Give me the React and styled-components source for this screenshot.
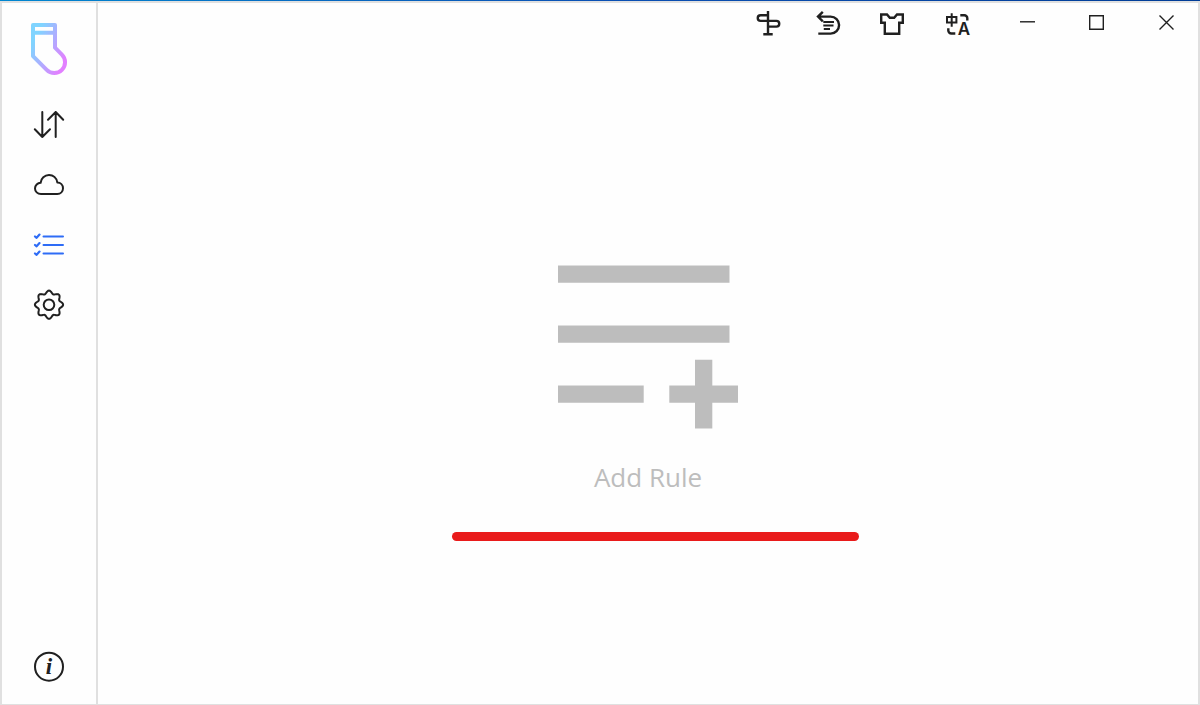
import { useState } from "react";
import styled, { createGlobalStyle } from "styled-components";

const GlobalStyle = createGlobalStyle`
  * {
    box-sizing: border-box;
  }
  body {
    margin: 0;
    background: #fefefe;
    color: #202020;
    font-family: "Open Sans", "Noto Sans", sans-serif;
  }
`;

const Window = styled.div`
  display: flex;
  flex-direction: column;
  min-height: 100vh;
`;

const AccentStrip = styled.div`
  height: 1px;
  background: linear-gradient(90deg, #0086d0, #0a50b4 50%, #003c96);
`;

const Frame = styled.div`
  display: flex;
  flex: 1;
  border: 2px solid #e0e0e0;
  border-bottom-width: 1px;
`;

const Sidebar = styled.nav`
  display: flex;
  flex-direction: column;
  align-items: center;
  flex: none;
  width: 96px;
  padding: 18px 0 7px;
  border-right: 2px solid #e0e0e0;
`;

const Logo = styled.svg`
  flex: none;
  width: 40px;
  height: 56px;
  margin-bottom: 18px;
`;

const NavButton = styled.button`
  display: flex;
  align-items: center;
  justify-content: center;
  width: 100%;
  height: 60px;
  padding: 0;
  border: none;
  background: none;
  color: ${({ $active }) => ($active ? "#2e6cf6" : "#202020")};
  cursor: pointer;
`;

const Spacer = styled.div`
  flex: 1;
`;

const Page = styled.div`
  display: flex;
  flex-direction: column;
  flex: 1;
  min-width: 0;
`;

const TitleBar = styled.header`
  display: flex;
  justify-content: flex-end;
  gap: 6px;
`;

const BarButton = styled.button`
  display: flex;
  align-items: center;
  justify-content: center;
  width: ${({ $width }) => $width}px;
  height: 40px;
  padding: 0;
  border: none;
  background: none;
  color: #202020;
`;

const Main = styled.main`
  display: flex;
  flex-direction: column;
  align-items: center;
  justify-content: center;
  flex: 1;
  padding-top: 58px;
`;

const AddButton = styled.button`
  display: flex;
  flex-direction: column;
  align-items: center;
  gap: 30px;
  padding: 0;
  border: none;
  background: none;
  color: #bdbdbd;
  font-family: inherit;
  font-size: 26px;
  line-height: 36px;
  cursor: pointer;
`;

const Underline = styled.hr`
  width: 407px;
  max-width: 100%;
  height: 9px;
  margin: 37px 0 0 14px;
  border: none;
  border-radius: 5px;
  background: #e91b1b;
`;

const IconSvg = styled.svg`
  flex: none;
  overflow: visible;
`;

const Icon = ({ size, stroke = 2, sharp, children }) => (
  <IconSvg
    width={size}
    height={size}
    viewBox={`0 0 ${size} ${size}`}
    fill="none"
    stroke="currentColor"
    strokeWidth={stroke}
    strokeLinecap={sharp ? "butt" : "round"}
    strokeLinejoin={sharp ? "miter" : "round"}
    aria-hidden="true"
  >
    {children}
  </IconSvg>
);

// eight rounded teeth
const gearPoints = Array.from({ length: 128 }, (_, i) => {
  const a = (i / 128) * Math.PI * 2;
  const r = 12.6 + 1.5 * Math.cos(8 * a);
  return `${16 + r * Math.cos(a)},${15.7 + r * Math.sin(a)}`;
}).join(" ");

const navItems = [
  {
    name: "Servers",
    icon: <path d="M9.3 3V28M1.8 20.2L9.3 28L17 20.2M22.7 28V3M15 10.8L22.7 3L30.2 10.8" />,
  },
  {
    name: "Subscriptions",
    icon: (
      <path d="M8 25C4.5 25 2 22.5 2 19.5C2 16.3 4.6 13.9 7.6 13.8C8 9.4 11.6 6 16 6C20.2 6 23.6 9 24.3 13.4C27.6 13.4 30 16 30 19.2C30 22.5 27.5 25 24.3 25Z" />
    ),
  },
  {
    name: "Rules",
    icon: (
      <>
        <path d="M10.5 7.4H30M10.5 16H30M10.5 24.6H30" />
        <path d="M2 7.5L3.6 8.8L6.5 5.6M2 16L3.6 17.3L6.5 14.1M2 24.5L3.6 25.8L6.5 22.6" strokeWidth="2.2" />
      </>
    ),
  },
  {
    name: "Settings",
    icon: (
      <>
        <polygon points={gearPoints} />
        <circle cx="16" cy="15.7" r="5.3" />
      </>
    ),
  },
];

const tools = [
  {
    name: "Guide",
    width: 54,
    icon: (
      <path d="M12 1V24.3M7.3 24.3H16.7M12 5.2H4.6A2.8 2.8 0 0 0 4.6 10.9H20.4A2.8 2.8 0 0 1 20.4 16.6H12" />
    ),
  },
  {
    name: "Log",
    width: 54,
    icon: (
      <>
        <path d="M6.8 1.8L2 6.6L6.8 11.4M2 6.6H14.6A8.5 8.5 0 0 1 14.6 23.6H2.3" />
        <path d="M7.3 12H18M7.3 15.5H17.5M7.8 19H14" strokeWidth="2" />
      </>
    ),
  },
  {
    name: "Theme",
    width: 60,
    icon: (
      <path d="M2.2 4.5H8L10.8 7.8H15.2L18 4.5H23.8V12.8H20.2V23.7H5.8V12.8H2.2Z" />
    ),
  },
  {
    name: "Language",
    width: 60,
    icon: (
      <>
        <path d="M2 7H11.4V12.4H2ZM6.7 3.2V16.8" strokeWidth="2" />
        <path d="M15.3 5.2H19.3A3 3 0 0 1 22.3 8.2V10.6M3.3 18.3V20.5A3 3 0 0 0 6.3 23.5H10.3" />
        <text
          x="19"
          y="25"
          textAnchor="middle"
          fill="currentColor"
          stroke="none"
          fontFamily="Inter"
          fontWeight="600"
          fontSize="17"
        >
          A
        </text>
      </>
    ),
  },
];

const captions = [
  { name: "Minimize", icon: <path d="M3 7.8H18" /> },
  { name: "Maximize", icon: <path d="M2.7 1.7H16.3V15.3H2.7Z" /> },
  { name: "Close", icon: <path d="M2.5 1.5L16.5 15.5M16.5 1.5L2.5 15.5" /> },
];

const SockLogo = () => (
  <Logo viewBox="0 0 40 56" fill="none" aria-hidden="true">
    <defs>
      <linearGradient id="sock" gradientUnits="userSpaceOnUse" x1="4" y1="22" x2="36" y2="38">
        <stop offset="0" stopColor="#80d4ff" />
        <stop offset="1" stopColor="#e280ff" />
      </linearGradient>
    </defs>
    <path
      d="M4 4H26V26.7L32.9 33.6A10.7 10.7 0 0 1 17.7 48.8L4 35.1ZM4 11.8H26"
      stroke="url(#sock)"
      strokeWidth="4"
      strokeLinejoin="round"
    />
  </Logo>
);

const App = () => {
  const [page, setPage] = useState("Rules");

  return (
    <Window>
      <GlobalStyle />
      <AccentStrip />
      <Frame>
        <Sidebar>
          <SockLogo />
          {navItems.map((item) => (
            <NavButton
              key={item.name}
              aria-label={item.name}
              $active={page === item.name}
              onClick={() => setPage(item.name)}
            >
              <Icon size={32}>{item.icon}</Icon>
            </NavButton>
          ))}
          <Spacer />
          <NavButton
            aria-label="About"
            $active={page === "About"}
            onClick={() => setPage("About")}
          >
            <Icon size={32}>
              <circle cx="16" cy="15.7" r="14" />
              <text
                x="16"
                y="23"
                textAnchor="middle"
                fill="currentColor"
                stroke="none"
                fontFamily="Liberation Serif"
                fontStyle="italic"
                fontWeight="700"
                fontSize="23"
              >
                i
              </text>
            </Icon>
          </NavButton>
        </Sidebar>
        <Page>
          <TitleBar>
            {tools.map((tool) => (
              <BarButton key={tool.name} aria-label={tool.name} $width={tool.width}>
                <Icon size={26} stroke={2.4} sharp>{tool.icon}</Icon>
              </BarButton>
            ))}
            {captions.map((caption) => (
              <BarButton key={caption.name} aria-label={caption.name} $width={64}>
                <Icon size={18} stroke={1.4} sharp>{caption.icon}</Icon>
              </BarButton>
            ))}
          </TitleBar>
          <Main>
            <AddButton>
              <svg width="180" height="164" viewBox="0 0 180 164" fill="currentColor" aria-hidden="true">
                <path d="M0 .5H171.5V17.8H0ZM0 60.5H171.5V77.8H0ZM0 120.5H85.7V137.8H0Z" />
                <path d="M137 94.8H154.3V120.5H180V137.8H154.3V163.6H137V137.8H111.3V120.5H137Z" />
              </svg>
              Add Rule
            </AddButton>
            <Underline />
          </Main>
        </Page>
      </Frame>
    </Window>
  );
};

export default App;
